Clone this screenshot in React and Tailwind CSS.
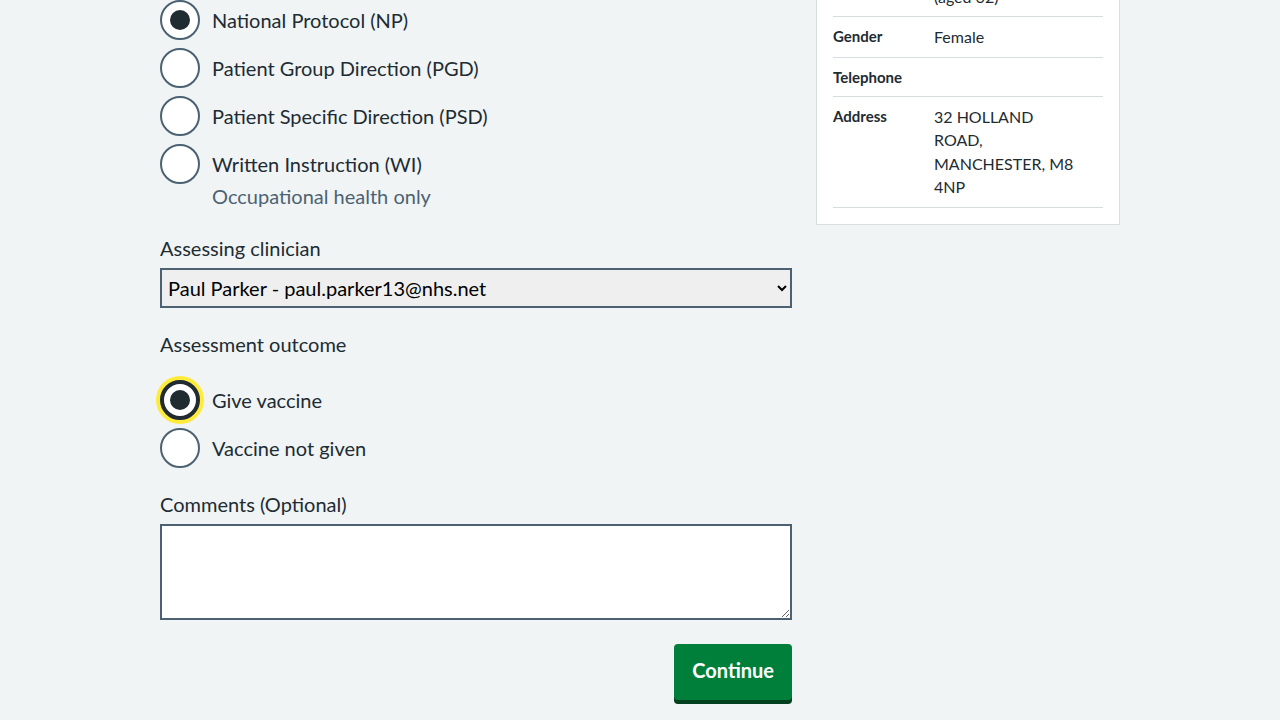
const protocols = [
  { label: 'National Protocol (NP)', checked: true },
  { label: 'Patient Group Direction (PGD)' },
  { label: 'Patient Specific Direction (PSD)' },
  { label: 'Written Instruction (WI)', hint: 'Occupational health only' },
]

const outcomes = [
  { label: 'Give vaccine', checked: true, focused: true },
  { label: 'Vaccine not given' },
]

const patient = [
  { key: 'Date of birth', value: '14 February 1961 (aged 62)' },
  { key: 'Gender', value: 'Female' },
  { key: 'Telephone', value: '' },
  { key: 'Address', value: '32 HOLLAND ROAD, MANCHESTER, M8 4NP' },
]

export default function App() {
  return (
    <div className="min-h-screen bg-[#f0f4f5] text-[#212b32] font-['Lato','Noto_Sans',sans-serif] overflow-hidden">
      <div className="max-w-[960px] mx-auto flex items-start gap-6">
        {/* Form */}
        <main className="w-[632px] shrink-0">
          <div className="flex flex-col gap-2">
            {protocols.map((p) => (
              <Radio key={p.label} {...p} />
            ))}
          </div>

          <div className="mt-7">
            <label className="block text-[20px] leading-6 mb-2">Assessing clinician</label>
            <select className="w-full h-10 border-2 border-[#4c6272] bg-[#efefef] text-[20px] text-black pl-0.5 pr-1 rounded-none">
              <option>Paul Parker - paul.parker13@nhs.net</option>
            </select>
          </div>

          <fieldset className="mt-6">
            <legend className="text-[20px] leading-6 mb-6">Assessment outcome</legend>
            <div className="flex flex-col gap-2">
              {outcomes.map((o) => (
                <Radio key={o.label} {...o} />
              ))}
            </div>
          </fieldset>

          <div className="mt-6">
            <label className="block text-[20px] leading-6 mb-2">Comments (Optional)</label>
            <textarea className="block w-full h-24 border-2 border-[#4c6272] bg-white resize-y" />
          </div>

          <div className="mt-6 flex justify-end">
            <button className="h-14 px-[18px] pb-1 bg-[#007f3b] text-white font-bold text-[20px] rounded shadow-[0_4px_0_#00401e]">
              Continue
            </button>
          </div>
        </main>

        {/* Patient details */}
        <aside className="w-[304px] shrink-0 -mt-[48px] bg-white border border-[#d8dde0] px-4 pb-4">
          {patient.map((row) => (
            <div key={row.key} className="flex py-2 border-b border-[#d8dde0]">
              <div className="w-[101px] shrink-0 text-[15px] font-bold leading-[22px]">{row.key}</div>
              <div className="w-[145px] text-[16px] leading-[23.5px]">{row.value}</div>
            </div>
          ))}
        </aside>
      </div>
    </div>
  )
}

function Radio({ label, hint, checked, focused }) {
  return (
    <div>
      <div className="flex items-center gap-3">
        <span
          className={`w-10 h-10 rounded-full bg-white flex items-center justify-center shrink-0 ${
            focused
              ? 'border-4 border-[#212b32] shadow-[0_0_0_4px_#ffeb3b]'
              : 'border-2 border-[#4c6272]'
          }`}
        >
          {checked && <span className="w-5 h-5 rounded-full bg-[#212b32]" />}
        </span>
        <span className="text-[20px] leading-6">{label}</span>
      </div>
      {hint && <p className="pl-[52px] text-[20px] leading-6 text-[#4c6272]">{hint}</p>}
    </div>
  )
}
